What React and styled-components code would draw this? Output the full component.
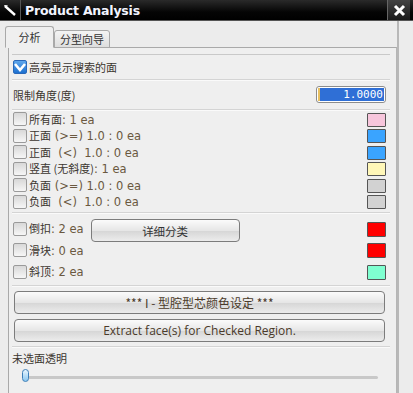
import styled, { createGlobalStyle } from "styled-components";

const Global = createGlobalStyle`
  html, body { margin: 0; padding: 0; background: #f0f0f0; }
  body { font-family: "DejaVu Sans", "Noto Sans CJK SC", sans-serif; }
`;

const faceRows = [
  { label: "所有面", value: ": 1 ea", color: "#f7c6dc" },
  { label: "正面", value: " (>=) 1.0 : 0 ea", color: "#3aa4ff" },
  { label: "正面", value: "  (<)  1.0 : 0 ea", color: "#3aa4ff" },
  { label: "竖直 (无斜度)", value: ": 1 ea", color: "#fff7b8" },
  { label: "负面", value: " (>=) 1.0 : 0 ea", color: "#d2d2d2" },
  { label: "负面", value: "  (<)  1.0 : 0 ea", color: "#d2d2d2" },
];

const partRows = [
  { label: "倒扣", value: ": 2 ea", color: "#ff0000", button: true },
  { label: "滑块", value: ": 0 ea", color: "#ff0000" },
  { label: "斜顶", value: ": 2 ea", color: "#7fffd0" },
];

const App = () => {
  return (
    <Window>
      <Global />
      <TitleBar>
        <TitleIcon>
          <svg width="14" height="14" viewBox="0 0 14 14">
            <path d="M2 3 L12 12" stroke="#fff" strokeWidth="2.4" />
            <path d="M1 2 L5 2.5 L2.5 5 Z" fill="#fff" />
          </svg>
        </TitleIcon>
        <Title>Product Analysis</Title>
        <CloseBox>
          <svg width="13" height="13" viewBox="0 0 13 13">
            <path d="M2 2 L11 11 M11 2 L2 11" stroke="#fff" strokeWidth="3" />
          </svg>
        </CloseBox>
      </TitleBar>
      <Body>
        <Tabs>
          <Tab $active>分析</Tab>
          <Tab>分型向导</Tab>
        </Tabs>
        <Panel>
          <Group>
            <Section $h={24}>
              <Check $checked>
                <svg width="12" height="10" viewBox="0 0 12 10">
                  <path d="M1 2 L6 8 L11 2" stroke="#fff" strokeWidth="2.6" fill="none" />
                </svg>
              </Check>
              <Label>高亮显示搜索的面</Label>
            </Section>
            <Section $h={29}>
              <Label>限制角度(度)</Label>
              <Spacer />
              <AngleInput>
                <Caret />
                <span>1.0000</span>
              </AngleInput>
            </Section>
            <List $pad={1}>
              {faceRows.map((r, i) => (
                <FaceRow key={i} $h={16.5}>
                  <Check />
                  <Label>
                    {r.label}
                    <Value>{r.value}</Value>
                  </Label>
                  <Spacer />
                  <Swatch $color={r.color} />
                </FaceRow>
              ))}
            </List>
            <List $pad={5}>
              {partRows.map((r, i) => (
                <FaceRow key={i} $h={21.5}>
                  <Check />
                  <Label>
                    {r.label}
                    <Value>{r.value}</Value>
                  </Label>
                  {r.button && <DetailButton>详细分类</DetailButton>}
                  <Spacer />
                  <Swatch $color={r.color} $big />
                </FaceRow>
              ))}
            </List>
            <Buttons>
              <WideButton>*** I - 型腔型芯颜色设定 ***</WideButton>
              <WideButton $latin>Extract face(s) for Checked Region.</WideButton>
            </Buttons>
            <SliderBlock>
              <Label>未选面透明</Label>
              <SliderTrack>
                <Thumb />
              </SliderTrack>
            </SliderBlock>
          </Group>
        </Panel>
      </Body>
    </Window>
  );
};

export default App;

const Window = styled.div`
  width: 413px;
  height: 393px;
  overflow: hidden;
  background: #ececec;
  display: flex;
  flex-direction: column;
`;

const TitleBar = styled.div`
  height: 20px;
  flex: none;
  display: flex;
  align-items: center;
  background: linear-gradient(#2a2a2a, #050505 60%, #000);
  border-bottom: 1px solid #555;
`;

const TitleIcon = styled.div`
  width: 20px;
  height: 20px;
  display: flex;
  align-items: center;
  justify-content: center;
  border-right: 1px solid #555;
`;

const Title = styled.div`
  flex: 1;
  padding-left: 4px;
  color: #f2f4ff;
  font-family: "DejaVu Sans", sans-serif;
  font-weight: bold;
  font-size: 12.5px;
  letter-spacing: -0.2px;
`;

const CloseBox = styled.div`
  width: 22px;
  height: 20px;
  margin-right: 3px;
  display: flex;
  align-items: center;
  justify-content: center;
  background: linear-gradient(#444, #1a1a1a);
  border-left: 1px solid #666;
`;

const Body = styled.div`
  flex: 1;
  width: 399px;
  box-sizing: border-box;
  padding: 4px 0 0 5px;
  border-right: 2px solid #b8b8b8;
  background: #ececec;
  display: flex;
  flex-direction: column;
`;

const Tabs = styled.div`
  display: flex;
  align-items: flex-end;
  height: 22px;
  position: relative;
  z-index: 1;
`;

const Tab = styled.div`
  height: ${(p) => (p.$active ? 22 : 18)}px;
  width: ${(p) => (p.$active ? 49 : 56)}px;
  box-sizing: border-box;
  display: flex;
  align-items: center;
  justify-content: center;
  font-size: 11px;
  color: #333;
  font-family: "Noto Sans CJK SC", sans-serif;
  border: 1px solid #a9a9a9;
  border-bottom: ${(p) => (p.$active ? "1px solid #efefef" : "1px solid #a9a9a9")};
  border-radius: 3px 3px 0 0;
  background: ${(p) => (p.$active ? "#efefef" : "linear-gradient(#f4f4f4, #dedede)")};
  margin-bottom: -1px;
`;

const Panel = styled.div`
  flex: 1;
  margin-left: 3px;
  border-left: 1px solid #a9a9a9;
  border-top: 1px solid #a9a9a9;
  border-right: 1px solid #b5b5b5;
  background: #efefef;
  padding: 6px 6px 0 3px;
`;

const Group = styled.div`
  border-top: 1px solid #c9c9c9;
  display: flex;
  flex-direction: column;
`;

const Section = styled.div`
  height: ${(p) => p.$h}px;
  display: flex;
  align-items: center;
  padding-left: 1px;
  border-bottom: 1px solid #d4d4d4;
  box-shadow: 0 1px 0 #fafafa;
`;

const List = styled.div`
  padding-top: ${(p) => p.$pad}px;
  padding-bottom: 2px;
  border-bottom: 1px solid #d4d4d4;
  box-shadow: 0 1px 0 #fafafa;
  display: flex;
  flex-direction: column;
`;

const FaceRow = styled.div`
  height: ${(p) => p.$h}px;
  display: flex;
  align-items: center;
  padding-left: 1px;
`;

const Spacer = styled.div`
  flex: 1;
`;

const Check = styled.div`
  width: 14px;
  height: 14px;
  box-sizing: border-box;
  flex: none;
  border-radius: 2px;
  border: 1px solid ${(p) => (p.$checked ? "#2a68b8" : "#9a9a9a")};
  background: ${(p) =>
    p.$checked
      ? "linear-gradient(#5ea6ec, #1d70d0)"
      : "linear-gradient(#d8d8d8, #f6f6f6)"};
  display: flex;
  align-items: center;
  justify-content: center;
  margin-right: 2px;
`;

const Label = styled.span`
  font-family: "Noto Sans CJK SC", sans-serif;
  font-size: 11px;
  color: #3c3630;
  white-space: pre;
  line-height: 14px;
`;

const Value = styled.span`
  font-family: "DejaVu Sans", sans-serif;
  font-size: 11.5px;
  color: #6a5840;
`;

const AngleInput = styled.div`
  width: 70px;
  height: 17px;
  box-sizing: border-box;
  margin-right: 4px;
  border: 1px solid #8c8c8c;
  border-radius: 3px;
  background: #fff;
  padding: 1px;
  display: flex;
  align-items: stretch;
  span {
    flex: 1;
    background: #2f6fd6;
    color: #fff;
    font-family: "DejaVu Sans Mono", monospace;
    font-size: 11px;
    line-height: 13px;
    text-align: right;
    padding-right: 1px;
    overflow: hidden;
  }
`;

const Caret = styled.div`
  width: 2px;
  background: #e8c060;
`;

const Swatch = styled.div`
  width: 19px;
  height: ${(p) => (p.$big ? 15 : 14)}px;
  box-sizing: border-box;
  margin-right: 4px;
  margin-top: 1px;
  border: 1px solid #555;
  border-radius: 1px;
  background: ${(p) => p.$color};
`;

const DetailButton = styled.div`
  width: 149px;
  height: 23px;
  box-sizing: border-box;
  margin-left: 7px;
  margin-top: 4px;
  border: 1px solid #7c7c7c;
  border-radius: 4px;
  background: linear-gradient(#fbfbfb, #e6e6e6 50%, #d6d6d6 52%, #ececec);
  display: flex;
  align-items: center;
  justify-content: center;
  font-family: "Noto Sans CJK SC", sans-serif;
  font-size: 11.5px;
  color: #333;
`;

const Buttons = styled.div`
  padding: 5px 5px 4px 2px;
  display: flex;
  flex-direction: column;
  gap: 5px;
  border-bottom: 1px solid #d4d4d4;
  box-shadow: 0 1px 0 #fafafa;
`;

const WideButton = styled.div`
  height: 23px;
  box-sizing: border-box;
  border: 1px solid #7c7c7c;
  border-radius: 4px;
  background: linear-gradient(#fbfbfb, #e6e6e6 50%, #d6d6d6 52%, #ececec);
  display: flex;
  align-items: center;
  justify-content: center;
  font-family: ${(p) =>
    p.$latin ? '"Open Sans", sans-serif' : '"Noto Sans CJK SC", sans-serif'};
  font-size: 12px;
  color: #4a3a2a;
`;

const SliderBlock = styled.div`
  padding: 4px 0 0 0;
  display: flex;
  flex-direction: column;
  gap: 4px;
`;

const SliderTrack = styled.div`
  position: relative;
  margin-left: 14px;
  margin-right: 12px;
  height: 14px;
  &::before {
    content: "";
    position: absolute;
    left: 0;
    right: 0;
    top: 7px;
    height: 3px;
    border-radius: 2px;
    background: #c8c8c8;
  }
`;

const Thumb = styled.div`
  position: absolute;
  left: -4px;
  top: 0;
  width: 7px;
  height: 13px;
  box-sizing: border-box;
  border: 1px solid #3d7fb8;
  border-radius: 4px;
  background: linear-gradient(#e8f6ff, #8cc8f0);
`;
